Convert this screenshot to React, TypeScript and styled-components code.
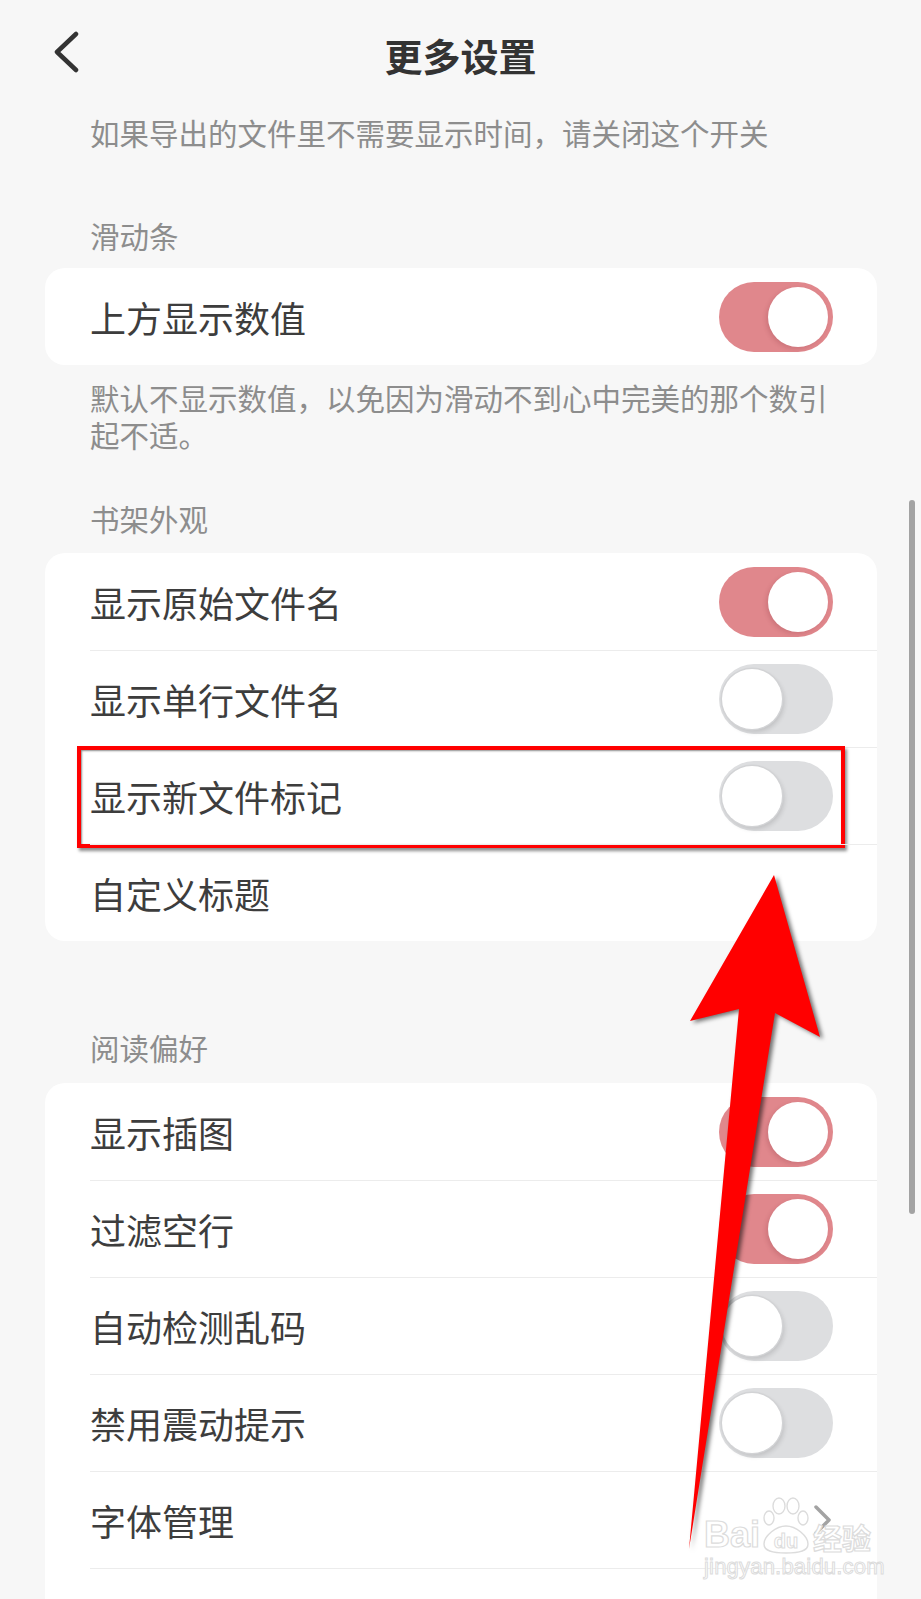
import React from "react";
import styled, { createGlobalStyle } from "styled-components";

const GlobalStyle = createGlobalStyle`
  html, body {
    margin: 0;
    padding: 0;
    background: #f7f7f7;
  }
  * { box-sizing: border-box; }
`;

const Page = styled.div`
  position: relative;
  width: 921px;
  height: 1599px;
  overflow: hidden;
  background: #f7f7f7;
  font-family: "Noto Sans CJK SC", "Noto Sans", sans-serif;
`;

const Header = styled.header`
  position: relative;
  height: 114px;
  display: flex;
  align-items: center;
  justify-content: center;
  padding-bottom: 4px;
`;

const BackButton = styled.button`
  position: absolute;
  left: 50px;
  top: 27px;
  width: 34px;
  height: 48px;
  padding: 0;
  border: none;
  background: transparent;
  display: flex;
  align-items: center;
  justify-content: center;
`;

const Title = styled.h1`
  margin: 0;
  font-size: 38px;
  font-weight: 700;
  color: #333333;
  line-height: 1;
`;

const Note = styled.p<{ $top?: number }>`
  margin: ${(p) => p.$top ?? 0}px 0 0;
  padding: 0 90px;
  font-size: 29.5px;
  line-height: 37px;
  color: #8d8d8d;
`;

const SectionTitle = styled.div<{ $top: number }>`
  margin-top: ${(p) => p.$top}px;
  padding: 0 90px;
  font-size: 29.5px;
  line-height: 37px;
  color: #8d8d8d;
`;

const Card = styled.section<{ $top: number }>`
  margin: ${(p) => p.$top}px 44px 0 45px;
  background: #ffffff;
  border-radius: 20px;
  padding-left: 45px;
`;

const Row = styled.div<{ $first?: boolean }>`
  position: relative;
  height: 97px;
  display: flex;
  align-items: center;
  justify-content: space-between;
  padding-right: 44px;
  border-top: ${(p) => (p.$first ? "none" : "1px solid #ececec")};
`;

const Label = styled.span`
  font-size: 36px;
  color: #3d3d3d;
  line-height: 1;
`;

const Track = styled.div<{ $on: boolean }>`
  width: 114px;
  height: 70px;
  border-radius: 35px;
  display: flex;
  align-items: center;
  justify-content: ${(p) => (p.$on ? "flex-end" : "flex-start")};
  padding: ${(p) => (p.$on ? "0 5px" : "0 3px")};
  background: ${(p) => (p.$on ? "#e0878c" : "#dddee0")};
`;

const Knob = styled.div<{ $on: boolean }>`
  width: 60px;
  height: 60px;
  border-radius: 50%;
  background: #ffffff;
  box-shadow: ${(p) =>
    p.$on
      ? "-2px 2px 4px rgba(120, 40, 50, 0.18)"
      : "0 0 0 1.5px #d2d3d5, 2px 3px 5px rgba(0, 0, 0, 0.14)"};
`;

const Highlight = styled.div`
  position: absolute;
  left: -13px;
  top: -2px;
  width: 768px;
  height: 102px;
  border: 4px solid #ff0000;
  box-shadow: 2px 3px 3px rgba(0, 0, 0, 0.45), inset 1px 1px 2px rgba(0, 0, 0, 0.45);
  pointer-events: none;
`;

const Chevron = styled.svg`
  width: 20px;
  height: 32px;
`;

const ArrowLayer = styled.svg`
  position: absolute;
  left: 0;
  top: 0;
  width: 921px;
  height: 1599px;
  pointer-events: none;
  filter: drop-shadow(3px 2px 2px rgba(0, 0, 0, 0.55));
`;

const Scrollbar = styled.div`
  position: absolute;
  left: 909px;
  top: 500px;
  width: 6px;
  height: 714px;
  border-radius: 3px;
  background: #a3a3a3;
`;

const Watermark = styled.div`
  position: absolute;
  left: 704px;
  top: 1496px;
  display: flex;
  flex-direction: column;
  align-items: flex-start;
  pointer-events: none;
`;

const MarkTop = styled.div`
  display: flex;
  align-items: flex-end;
  gap: 0px;
`;

const MarkLatin = styled.span`
  font-family: "Liberation Sans", Arial, sans-serif;
  font-weight: 700;
  font-size: 36px;
  line-height: 1;
  color: #ffffff;
  -webkit-text-stroke: 1.2px #dcdcdc;
  margin-bottom: 1px;
`;

const MarkCjk = styled.span`
  font-family: "Noto Sans CJK SC", sans-serif;
  font-weight: 700;
  font-size: 29px;
  line-height: 1;
  color: #ffffff;
  -webkit-text-stroke: 1.2px #dcdcdc;
  margin-left: 1px;
  margin-bottom: 2px;
`;

const MarkUrl = styled.span`
  font-family: "Liberation Sans", Arial, sans-serif;
  font-size: 22px;
  line-height: 1;
  margin-top: 2px;
  color: #ffffff;
  -webkit-text-stroke: 1px #dcdcdc;
  letter-spacing: 0.2px;
`;

const Toggle: React.FC<{ on: boolean }> = ({ on }) => (
  <Track $on={on}>
    <Knob $on={on} />
  </Track>
);

const Paw = () => (
  <svg width="52" height="58" viewBox="0 0 52 58">
    <g fill="#ffffff" stroke="#dcdcdc" strokeWidth="1.4">
      <ellipse cx="9" cy="22" rx="5" ry="7" />
      <ellipse cx="19" cy="10" rx="6" ry="8" />
      <ellipse cx="33" cy="10" rx="6" ry="8" />
      <ellipse cx="43" cy="22" rx="5" ry="7" />
      <path d="M26 30 C36 30 48 40 48 48 C48 55 40 57 26 57 C12 57 4 55 4 48 C4 40 16 30 26 30 Z" />
    </g>
    <text
      x="26"
      y="52"
      textAnchor="middle"
      fontFamily="Liberation Sans, Arial, sans-serif"
      fontWeight="700"
      fontSize="20"
      fill="#ffffff"
      stroke="#dcdcdc"
      strokeWidth="1"
    >
      du
    </text>
  </svg>
);

export default function App() {
  return (
    <>
      <GlobalStyle />
      <Page>
        <Header>
          <BackButton aria-label="back">
            <svg width="30" height="44" viewBox="0 0 30 44">
              <polyline
                points="24,5 5,23 24,41"
                fill="none"
                stroke="#333333"
                strokeWidth="4.5"
                strokeLinecap="round"
                strokeLinejoin="round"
              />
            </svg>
          </BackButton>
          <Title>更多设置</Title>
        </Header>

        <Note>如果导出的文件里不需要显示时间，请关闭这个开关</Note>

        <SectionTitle $top={66}>滑动条</SectionTitle>
        <Card $top={14}>
          <Row $first>
            <Label>上方显示数值</Label>
            <Toggle on />
          </Row>
        </Card>
        <Note $top={14}>
          默认不显示数值，以免因为滑动不到心中完美的那个数引起不适。
        </Note>

        <SectionTitle $top={47}>书架外观</SectionTitle>
        <Card $top={16}>
          <Row $first>
            <Label>显示原始文件名</Label>
            <Toggle on />
          </Row>
          <Row>
            <Label>显示单行文件名</Label>
            <Toggle on={false} />
          </Row>
          <Row>
            <Label>显示新文件标记</Label>
            <Toggle on={false} />
            <Highlight />
          </Row>
          <Row>
            <Label>自定义标题</Label>
          </Row>
        </Card>

        <SectionTitle $top={88}>阅读偏好</SectionTitle>
        <Card $top={17}>
          <Row $first>
            <Label>显示插图</Label>
            <Toggle on />
          </Row>
          <Row>
            <Label>过滤空行</Label>
            <Toggle on />
          </Row>
          <Row>
            <Label>自动检测乱码</Label>
            <Toggle on={false} />
          </Row>
          <Row>
            <Label>禁用震动提示</Label>
            <Toggle on={false} />
          </Row>
          <Row>
            <Label>字体管理</Label>
            <Chevron viewBox="0 0 20 32">
              <polyline
                points="3,3 16,16 3,29"
                fill="none"
                stroke="#a3a3a3"
                strokeWidth="3.5"
                strokeLinecap="round"
                strokeLinejoin="round"
              />
            </Chevron>
          </Row>
          <Row>
            <Label />
          </Row>
        </Card>

        <Scrollbar />

        <Watermark>
          <MarkTop>
            <MarkLatin>Bai</MarkLatin>
            <Paw />
            <MarkCjk>经验</MarkCjk>
          </MarkTop>
          <MarkUrl>jingyan.baidu.com</MarkUrl>
        </Watermark>

        <ArrowLayer viewBox="0 0 921 1599">
          <polygon
            points="774,875 820,1037 775,1013 689,1549 739,1009 690,1021"
            fill="#ff0000"
          />
        </ArrowLayer>
      </Page>
    </>
  );
}
